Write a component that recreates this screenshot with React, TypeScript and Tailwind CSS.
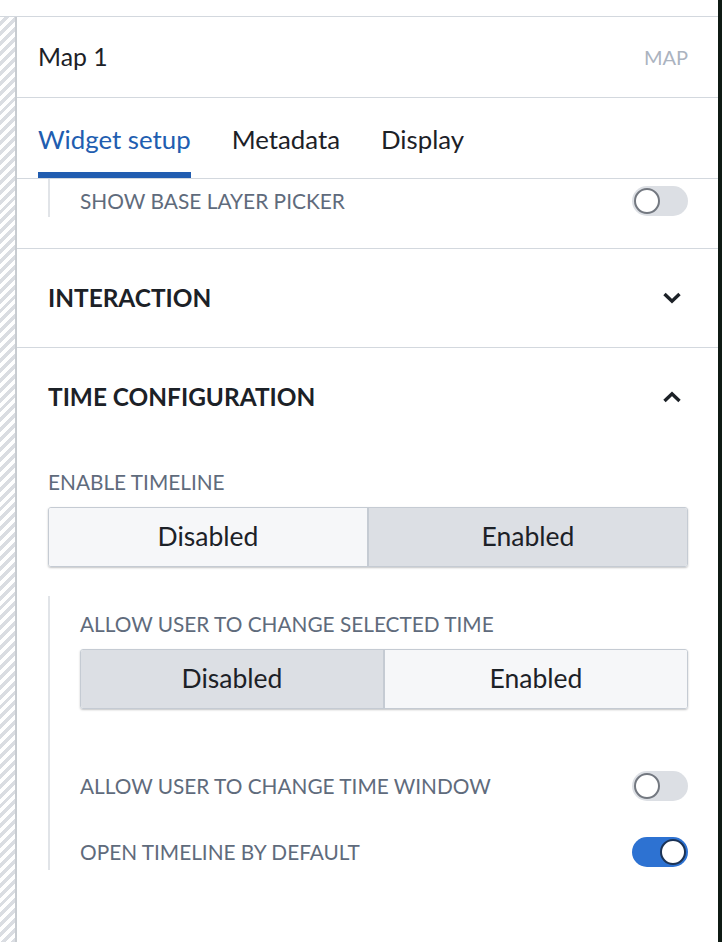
import React from "react";

const FONT = { fontFamily: "Lato, 'Noto Sans', sans-serif" };

function Toggle({ on }: { on: boolean }) {
  return (
    <div
      className={
        "w-[56px] h-[30px] rounded-full flex items-center p-[2px] shrink-0 " +
        (on ? "bg-[#2d72d2] justify-end" : "bg-[#dcdfe4] justify-start")
      }
    >
      <div
        className={
          "w-[26px] h-[26px] rounded-full bg-white border-2 " +
          (on ? "border-[#1c3355]" : "border-[#737880]")
        }
      />
    </div>
  );
}

function Chevron({ up }: { up: boolean }) {
  return (
    <svg width="20" height="12" viewBox="0 0 20 12" className="shrink-0">
      <path
        d={up ? "M2.5 10 L10 2.8 L17.5 10" : "M2.5 2 L10 9.2 L17.5 2"}
        fill="none"
        stroke="#1c2127"
        strokeWidth="3.4"
        strokeLinejoin="miter"
      />
    </svg>
  );
}

function Segmented({ active }: { active: 0 | 1 }) {
  const items = ["Disabled", "Enabled"];
  return (
    <div className="flex h-[60px] rounded-[3px] border border-[#c5cbd3] shadow-[0_1px_2px_rgba(17,20,24,0.25)] overflow-hidden">
      {items.map((t, i) => (
        <div
          key={t}
          className={
            "flex-1 flex items-center justify-center text-[26.5px] text-[#1c2127] " +
            (i === 1 ? "border-l-2 border-[#c5cbd3] " : "") +
            (i === active ? "bg-[#dcdfe4]" : "bg-[#f6f7f9]")
          }
        >
          {t}
        </div>
      ))}
    </div>
  );
}

export default function App() {
  return (
    <div className="w-[722px] h-[942px] flex bg-white overflow-hidden" style={FONT}>
      <div className="flex-1 flex flex-col">
        <div className="h-[17px] border-b border-[#d3d8de] shrink-0" />
        <div className="flex flex-1">
          <div className="w-[17px] shrink-0 border-r-2 border-[#c8ccd1] bg-[repeating-linear-gradient(135deg,#ffffff_0px,#ffffff_3.5px,#dadde2_3.5px,#dadde2_7px)]" />
          <div className="flex-1 flex flex-col bg-white">
            {/* Header */}
            <div className="h-[81px] shrink-0 flex items-center justify-between pl-[21px] pr-[30px] border-b border-[#d3d8de]">
              <span className="text-[24.8px] text-[#1c2127]">Map 1</span>
              <span className="text-[20px] text-[#abb3bf]">MAP</span>
            </div>
            {/* Tabs */}
            <div className="h-[81px] shrink-0 flex gap-[41px] pl-[21px] border-b border-[#d3d8de]">
              {["Widget setup", "Metadata", "Display"].map((t, i) => (
                <div key={t} className="flex flex-col">
                  <div
                    className={
                      "flex-1 flex items-center pt-[8px] text-[25.8px] " +
                      (i === 0 ? "text-[#215db0]" : "text-[#1c2127]")
                    }
                  >
                    {t}
                  </div>
                  <div className={"h-[6px] " + (i === 0 ? "bg-[#215db0]" : "")} />
                </div>
              ))}
            </div>
            {/* Partial section */}
            <div className="h-[70px] shrink-0 pl-[31px] pr-[30px] pb-[31px] border-b border-[#d3d8de]">
              <div className="border-l-2 border-[#e1e4e8] pl-[30px] pt-[7px] pb-[1px]">
                <div className="h-[30px] flex items-center justify-between">
                  <span className="text-[20.9px] text-[#5f6b7c]">SHOW BASE LAYER PICKER</span>
                  <Toggle on={false} />
                </div>
              </div>
            </div>
            {/* Interaction */}
            <div className="h-[99px] shrink-0 flex items-center justify-between pl-[31px] pr-[36px] border-b border-[#d3d8de]">
              <span className="text-[24.4px] font-bold text-[#1c2127]">INTERACTION</span>
              <Chevron up={false} />
            </div>
            {/* Time configuration */}
            <div className="h-[98px] shrink-0 flex items-center justify-between pl-[31px] pr-[36px]">
              <span className="text-[24.4px] font-bold text-[#1c2127]">TIME CONFIGURATION</span>
              <Chevron up={true} />
            </div>
            <div className="pl-[31px] pr-[30px] pt-[24px] flex flex-col">
              <div className="text-[20.8px] leading-[24px] text-[#5f6b7c]">ENABLE TIMELINE</div>
              <div className="mt-[13px]">
                <Segmented active={1} />
              </div>
              <div className="mt-[29px] border-l-2 border-[#e1e4e8] pl-[30px] pt-[16px] pb-[3px] flex flex-col">
                <div className="text-[20.8px] leading-[24px] text-[#5f6b7c]">
                  ALLOW USER TO CHANGE SELECTED TIME
                </div>
                <div className="mt-[13px]">
                  <Segmented active={0} />
                </div>
                <div className="mt-[62px] h-[30px] flex items-center justify-between">
                  <span className="text-[20.8px] text-[#5f6b7c]">ALLOW USER TO CHANGE TIME WINDOW</span>
                  <Toggle on={false} />
                </div>
                <div className="mt-[36px] h-[30px] flex items-center justify-between">
                  <span className="text-[20.8px] text-[#5f6b7c]">OPEN TIMELINE BY DEFAULT</span>
                  <Toggle on={true} />
                </div>
              </div>
            </div>
          </div>
        </div>
      </div>
      <div className="w-[4px] shrink-0 bg-[#0f1a14]" />
    </div>
  );
}
